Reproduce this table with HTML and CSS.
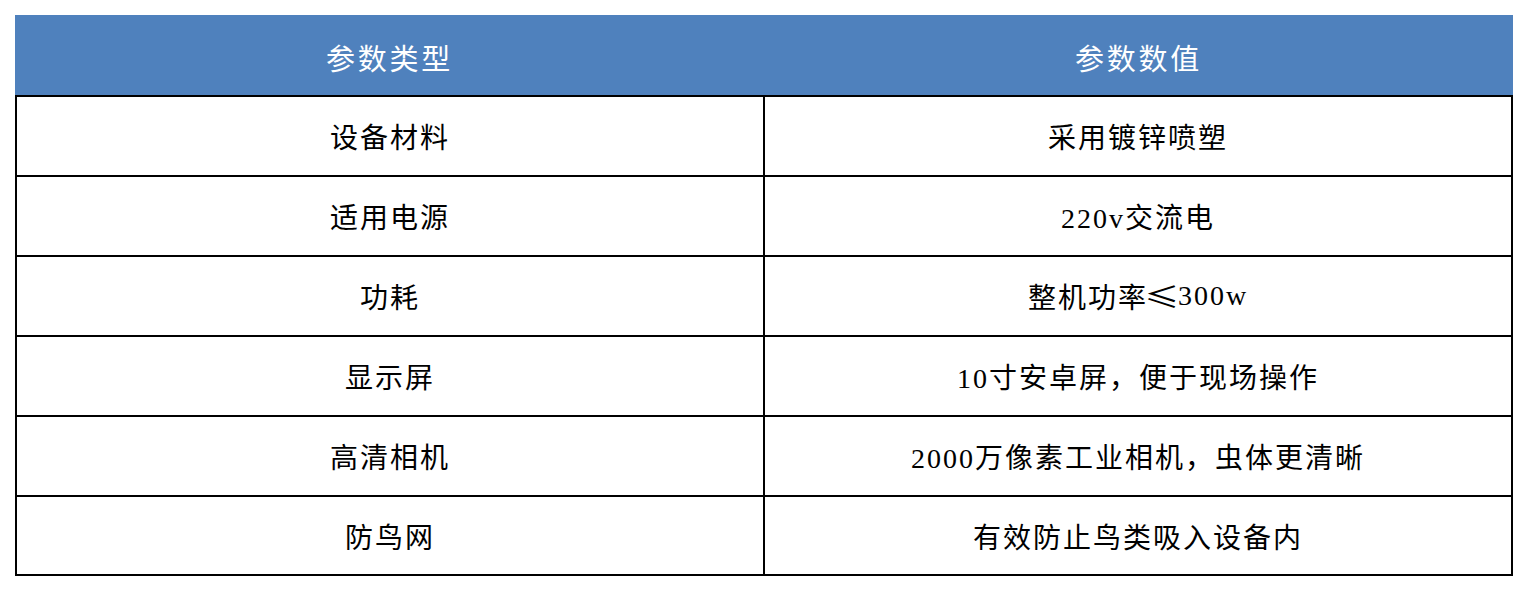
FILE: index.html
```html
<!DOCTYPE html>
<html lang="zh-CN">
<head>
<meta charset="utf-8">
<title>参数表</title>
<link rel="stylesheet" href="styles.css">
</head>
<body>
<div class="table">
  <div class="head">
    <div class="hcell">参数类型</div>
    <div class="hcell">参数数值</div>
  </div>
  <div class="body">
    <div class="row"><div class="cell left">设备材料</div><div class="cell">采用镀锌喷塑</div></div>
    <div class="row"><div class="cell left">适用电源</div><div class="cell">220v交流电</div></div>
    <div class="row"><div class="cell left">功耗</div><div class="cell">整机功率<span class="cjk">≤</span>300w</div></div>
    <div class="row"><div class="cell left">显示屏</div><div class="cell">10寸安卓屏，便于现场操作</div></div>
    <div class="row"><div class="cell left">高清相机</div><div class="cell">2000万像素工业相机，虫体更清晰</div></div>
    <div class="row last"><div class="cell left">防鸟网</div><div class="cell">有效防止鸟类吸入设备内</div></div>
  </div>
</div>
</body>
</html>
```

FILE: styles.css
```css
* { box-sizing: border-box; }
html, body { margin: 0; padding: 0; background: #ffffff; }
body {
  font-family: "Liberation Serif", "Noto Sans CJK SC", serif;
  color: #000000;
}
.table {
  margin: 15px 0 0 15px;
  width: 1498px;
}
.head {
  display: grid;
  grid-template-columns: 749px 749px;
  height: 80px;
  background: #4f81bd;
}
.hcell {
  display: flex;
  align-items: center;
  justify-content: center;
  color: #ffffff;
  font-size: 29px;
  letter-spacing: 2.8px;
  padding-top: 4px;
}
.body {
  border: 2px solid #000000;
}
.row {
  display: grid;
  grid-template-columns: 748px 746px;
  height: 80px;
  border-bottom: 2px solid #000000;
}
.row.last {
  border-bottom: none;
  height: 77px;
}
.cell {
  display: flex;
  align-items: center;
  justify-content: center;
  font-size: 28px;
  letter-spacing: 2px;
}
.cell.left {
  border-right: 2px solid #000000;
}
.cjk {
  font-family: "Noto Sans CJK SC", sans-serif;
  display: inline-block;
  width: 28px;
  margin-right: 2px;
  transform: scaleX(1.25);
  text-align: center;
}
```
